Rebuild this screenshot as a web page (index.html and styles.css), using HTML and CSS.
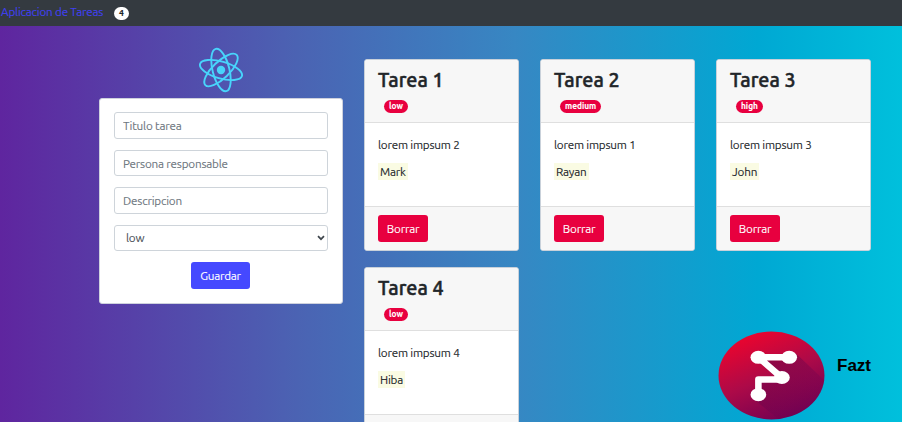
FILE: index.html
```html
<!DOCTYPE html>
<html lang="es">
<head>
<meta charset="utf-8">
<title>Aplicacion de Tareas</title>
<link rel="stylesheet" href="styles.css">
</head>
<body>
<nav class="navbar"><a class="brand">Aplicacion de Tareas</a><span class="count">4</span></nav>
<main class="layout">
  <section class="side">
    <svg class="logo" viewBox="0 0 46 46" fill="none" stroke="#48d4fb" stroke-width="1.9">
      <g transform="rotate(-14 23 23)">
        <ellipse cx="23" cy="23" rx="8.4" ry="21.8"/>
        <ellipse cx="23" cy="23" rx="8.4" ry="21.8" transform="rotate(60 23 23)"/>
        <ellipse cx="23" cy="23" rx="8.4" ry="21.8" transform="rotate(120 23 23)"/>
      </g>
      <circle cx="23" cy="23" r="4.2" fill="#48d4fb" stroke="none"/>
    </svg>
    <form class="form">
      <input class="field" type="text" placeholder="Titulo tarea">
      <input class="field" type="text" placeholder="Persona responsable">
      <input class="field" type="text" placeholder="Descripcion">
      <div class="field select"><span>low</span><svg class="caret" viewBox="0 0 8 6"><path d="M1 1.2 4 4.2 7 1.2" fill="none" stroke="#3f464d" stroke-width="1.7"/></svg></div>
      <button class="btn primary" type="button">Guardar</button>
    </form>
  </section>
  <section class="cards">
    <article class="card"><header class="head"><h3>Tarea 1</h3><span class="pill">low</span></header><div class="body"><p>lorem impsum 2</p><mark>Mark</mark></div><footer class="foot"><button class="btn danger">Borrar</button></footer></article>
    <article class="card"><header class="head"><h3>Tarea 2</h3><span class="pill">medium</span></header><div class="body"><p>lorem impsum 1</p><mark>Rayan</mark></div><footer class="foot"><button class="btn danger">Borrar</button></footer></article>
    <article class="card"><header class="head"><h3>Tarea 3</h3><span class="pill">high</span></header><div class="body"><p>lorem impsum 3</p><mark>John</mark></div><footer class="foot"><button class="btn danger">Borrar</button></footer></article>
    <article class="card"><header class="head"><h3>Tarea 4</h3><span class="pill">low</span></header><div class="body"><p>lorem impsum 4</p><mark>Hiba</mark></div><footer class="foot"></footer></article>
  </section>
</main>
<aside class="watermark">
  <svg class="fazt" viewBox="0 0 106 88">
    <defs>
      <linearGradient id="red" x1=".25" y1="0" x2=".75" y2="1"><stop offset="0" stop-color="#f0042c"/><stop offset=".5" stop-color="#ad0a48"/><stop offset="1" stop-color="#6d0053"/></linearGradient>
      <linearGradient id="shade" x1="0" y1="0" x2="1" y2="1"><stop offset="0" stop-color="#5d0646" stop-opacity=".6"/><stop offset=".8" stop-color="#6d0053" stop-opacity=".1"/></linearGradient>
      <clipPath id="disc"><ellipse cx="53" cy="44" rx="52.5" ry="43.5"/></clipPath>
    </defs>
    <ellipse cx="53" cy="44" rx="52.5" ry="43.5" fill="url(#red)"/>
    <path d="M77 22 L116 59 L75 100 L35 67 L45 46 L62 50 L48 28 L70 30Z" fill="url(#shade)" clip-path="url(#disc)"/>
    <path d="M71 26H40L63 46M63 48H40V63" fill="none" stroke="#fff" stroke-width="6.5" stroke-linejoin="round"/>
    <g fill="#fff"><ellipse cx="40" cy="26" rx="7.8" ry="6.4"/><ellipse cx="70.5" cy="26" rx="7.8" ry="6.4"/><ellipse cx="63.3" cy="46" rx="7.8" ry="6.4"/><ellipse cx="40" cy="63" rx="7.8" ry="6.4"/></g>
  </svg>
  <span>Fazt</span>
</aside>
</body>
</html>
```
FILE: styles.css
```css
* { box-sizing: border-box; }
body {
  margin: 0;
  height: 422px;
  overflow: hidden;
  position: relative;
  font: 11.7px/17px "Ubuntu", "Noto Sans", sans-serif;
  letter-spacing: -0.2px;
  -webkit-text-stroke: 0.1px;
  color: #212529;
  background: linear-gradient(to right, #5f259f 0%, #4b63b3 33%, #3787c3 57%, #00a8d3 84%, #00c0dc 100%);
}
.navbar { height: 25.5px; background: #343a40; display: flex; align-items: flex-start; padding: 3px 0 0 1px; }
.brand { color: #4040f4; width: 102px; white-space: nowrap; }
.count { margin: 4px 0 0 11px; width: 15px; height: 13px; border-radius: 7px; background: #fff; color: #212529; font-weight: 700; font-size: 8.5px; line-height: 12.5px; text-align: center; letter-spacing: 0; }
.layout { display: flex; padding-left: 99px; height: 396.5px; overflow: hidden; }
.side { width: 244px; padding-top: 21.5px; }
.logo { display: block; width: 46px; height: 46px; margin: 0 auto 4.5px; }
.form { height: 206.5px; background: #fff; border: 1px solid #ced1dd; border-radius: 3px; padding: 13.7px 14px; display: flex; flex-direction: column; gap: 10.8px; align-items: center; }
.field { width: 100%; height: 26.7px; flex: none; border: 1px solid #ced4da; border-radius: 3px; padding: 0 8px; font: inherit; letter-spacing: inherit; color: #495057; background: #fff; }
.field::placeholder { color: #6c757d; opacity: 1; }
.select { display: flex; align-items: center; justify-content: space-between; padding: 0 2px 0 11px; }
.caret { width: 8px; height: 6px; }
.btn { height: 27px; border: 0; border-radius: 3px; color: #fff; font: inherit; letter-spacing: inherit; padding: 0; }
.primary { width: 59px; margin-right: 1px; background: #4549ff; }
.danger { width: 50px; background: #e8003f; }
.cards { display: grid; grid-template-columns: repeat(3, 155.5px); grid-auto-rows: 192px; gap: 16.2px 20.5px; padding: 33.5px 0 0 20.5px; }
.card { background: #fff; border: 1px solid #c9d1da; border-radius: 3px; overflow: hidden; display: flex; flex-direction: column; }
.head { flex: none; height: 63px; padding: 8px 13.5px 0; background: #f7f7f7; border-bottom: 1px solid #dfdfdf; }
h3 { margin: 0; font-size: 19.7px; line-height: 24px; font-weight: 500; letter-spacing: 0; -webkit-text-stroke: 0.5px; }
.pill { display: block; width: max-content; height: 13px; margin: 8px 0 0 6px; padding: 0 5px; border-radius: 7px; background: #e8003f; color: #fff; font-size: 8.3px; font-weight: 700; line-height: 12px; letter-spacing: 0; }
.body { flex: none; height: 83px; padding: 12.8px 13.5px; }
.body p { margin: 0 0 10px; }
mark { display: inline-block; padding: 0 2px; background: #fafbe3; color: #212529; }
.foot { flex: 1; padding: 8.3px 13.5px; background: #f7f7f7; border-top: 1px solid #dfdfdf; }
.foot .btn { display: block; }
.watermark { position: absolute; left: 718px; top: 331px; display: flex; font: 700 17px/20px "Liberation Sans", Arial, sans-serif; letter-spacing: 0; color: #000; -webkit-text-stroke: 0; }
.fazt { width: 107px; height: 89px; margin-right: 12px; }
.watermark span { margin-top: 25px; }
```
